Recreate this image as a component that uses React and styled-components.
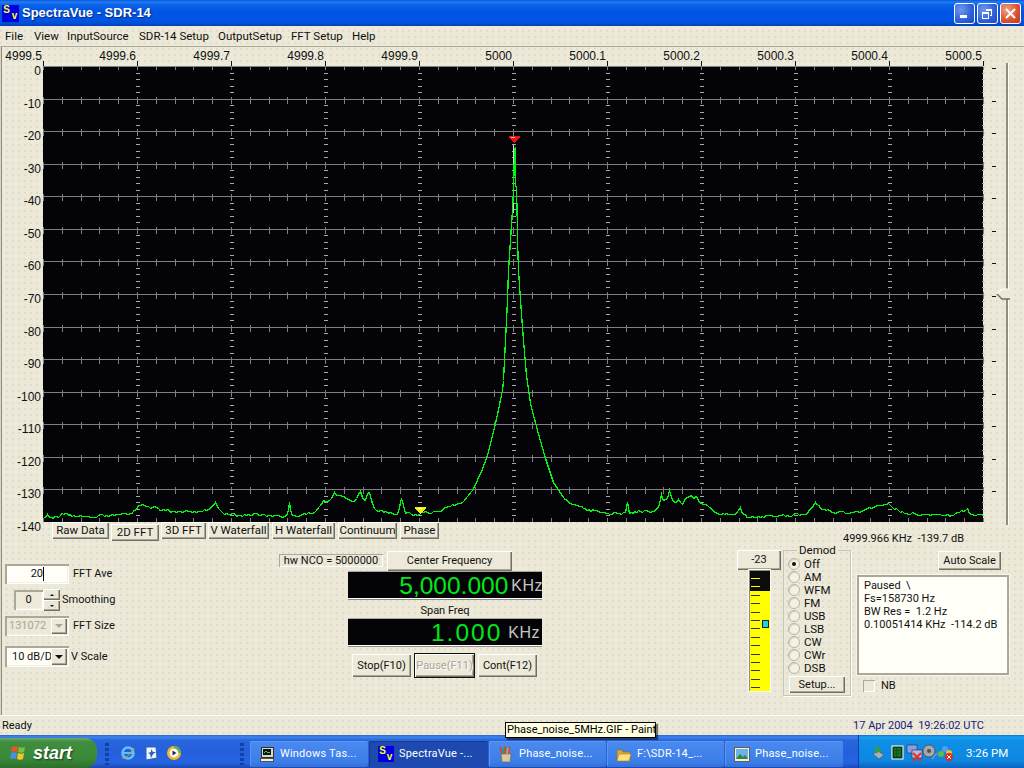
import React, { useMemo } from 'react';
import styled, { createGlobalStyle } from 'styled-components';

const Global = createGlobalStyle`
  html, body { margin: 0; padding: 0; background: #ece9d8; }
  #root { width: 1024px; height: 768px; overflow: hidden; }
  * { box-sizing: border-box; }
`;

const raised = `inset 1px 1px 0 #fff, inset -1px -1px 0 #716f64, inset -2px -2px 0 #aca899`;
const sunken = `inset 1px 1px 0 #aca899, inset 2px 2px 0 #aca899, inset -1px -1px 0 #fff, inset -2px -2px 0 #f1efe2`;

const Screen = styled.div`
  position: relative; width: 1024px; height: 768px; display: flex; flex-direction: column;
  font: 11px/14px Roboto, "Liberation Sans", Arial, sans-serif; color: #111; overflow: hidden;
  background-color: #ece9d8;
  background-image: radial-gradient(circle at 1px 1px, #e0ddcc 0.7px, transparent 1px);
  background-size: 6px 6px;
`;
const TitleBar = styled.div`
  height: 26px; flex: none; display: flex; align-items: center; padding: 0 3px 0 2px;
  background: linear-gradient(180deg, #0a56d8 0, #1f7bf4 2px, #0a62e8 5px, #0054e3 12px, #0055e5 20px, #0049c8 25px, #003dae 26px);
`;
const LogoBox = styled.span`
  width: ${p => p.$s}px; height: ${p => p.$s}px; flex: none; background: #0000e0; color: #ffff20; position: relative;
  font: bold ${p => Math.round(p.$s * 0.6)}px/1 "Liberation Sans", sans-serif; display: inline-block;
  & > i { position: absolute; font-style: normal; left: 8%; top: 2%; }
  & > b { position: absolute; right: 10%; bottom: 2%; }
`;
const TitleText = styled.span`
  margin-left: 3px; color: #fff; font: bold 13px/16px "Liberation Sans", sans-serif;
  text-shadow: 1px 1px 1px #0a2a80; flex: 1;
`;
const WinBtn = styled.span`
  width: 21px; height: 21px; flex: none; margin-left: 2px; border: 1px solid #fff; border-radius: 3px;
  display: flex; align-items: center; justify-content: center;
  background: ${p => p.$close
    ? 'radial-gradient(circle at 30% 30%, #f0a088, #d9502e 60%, #c03a18)'
    : 'radial-gradient(circle at 30% 30%, #6f97f0, #2f5fd8 60%, #1e48c0)'};
`;
const MenuBar = styled.div`
  height: 20px; flex: none; display: flex; align-items: center; padding-left: 5px; font-size: 11.5px;
`;
const MenuItem = styled.span`
  width: ${p => p.$w}px; flex: none; white-space: nowrap;
`;
const Main = styled.div`
  flex: 1; min-height: 0; display: flex; flex-direction: column; border-top: 1px solid #aca899;
  border-left: 1px solid #d8d5c4; box-shadow: inset 1px 0 0 #8f8d80; border-bottom: 1px solid #fff;
`;
const XAxis = styled.div`
  height: 14px; flex: none; display: grid; grid-template-columns: 41px repeat(10, 94px);
  font: 12px/14px "Liberation Sans", sans-serif; padding-top: 2px;
`;
const XLabel = styled.span`
  text-align: right; white-space: nowrap; margin-left: -20px;
`;
const PlotRow = styled.div`
  display: flex; height: 461px; flex: none;
`;
const YAxis = styled.div`
  width: 41px; flex: none; padding-top: 1px; display: grid; grid-auto-rows: 32.57px;
`;
const YLabel = styled.span`
  text-align: right; padding-right: 1px; font: 12px/18px "Liberation Sans", sans-serif;
`;
const Plot = styled.svg`
  width: 942px; height: 461px; display: block; flex: none;
`;
const SliderCol = styled.div`
  position: relative; flex: 1;
`;
const SliderTicks = styled.svg`
  position: absolute; left: 0; top: 0; width: 12px; height: 461px;
`;
const Track = styled.div`
  position: absolute; left: 22px; top: 2px; width: 3px; height: 462px; background: #8f8d80; border-right: 1px solid #fff;
`;
const Thumb = styled.svg`
  position: absolute; left: 12px; top: 227px; width: 15px; height: 12px;
`;
const TabsRow = styled.div`
  display: flex; height: 27px; flex: none; padding-left: 51px; align-items: flex-start; position: relative;
`;
const Tab = styled.button`
  all: unset; box-sizing: border-box; width: ${p => p.$w}px; height: 17px; margin-top: ${p => (p.$on ? 2 : 0)}px; margin-right: ${p => p.$gap}px;
  text-align: center; font-size: 11.5px; line-height: 15px; box-shadow: ${raised}; background: #ece9d8; flex: none;
`;
const CursorRead = styled.span`
  margin-left: auto; margin-right: 60px; margin-top: 10px; white-space: pre;
`;
const Controls = styled.div`
  flex: 1; display: flex; min-height: 0;
`;
const LeftCol = styled.div`
  width: 278px; flex: none; padding: 15px 0 0 4px; display: flex; flex-direction: column;
`;
const Row = styled.div`
  display: flex; align-items: center; height: ${p => p.$h}px; margin-top: ${p => p.$mt || 0}px;
`;
const Label = styled.span`
  margin-left: ${p => p.$ml}px; white-space: nowrap;
`;
const Field = styled.span`
  width: ${p => p.$w}px; height: ${p => p.$h}px; flex: none; margin-left: ${p => p.$ml || 0}px; box-shadow: ${sunken};
  display: flex; align-items: center; justify-content: ${p => p.$align || 'flex-start'}; padding: 0 ${p => p.$pad || 0}px;
  padding-right: ${p => p.$padR ?? p.$pad ?? 0}px;
  background: ${p => p.$bg || '#ece9d8'}; color: ${p => p.$color || '#111'}; overflow: hidden; white-space: nowrap; position: relative;
`;
const Caret = styled.i`
  display: inline-block; width: 1px; height: 14px; background: #000; margin-left: 0;
`;
const Spin = styled.span`
  width: 17px; height: 22px; flex: none; display: flex; flex-direction: column;
`;
const SpinBtn = styled.span`
  height: 11px; box-shadow: ${raised}; display: flex; align-items: center; justify-content: center;
`;
const SpinArrow = styled.i`
  width: 0; height: 0; border-left: 2px solid transparent; border-right: 2px solid transparent;
  ${p => p.$up ? 'border-bottom: 2px solid #111;' : 'border-top: 2px solid #111;'}
`;
const Drop = styled.span`
  position: absolute; right: 2px; top: 2px; bottom: 2px; width: 16px; box-shadow: ${raised}; background: #ece9d8;
  display: flex; align-items: center; justify-content: center;
`;
const Arrow = styled.i`
  width: 0; height: 0; border-left: 4px solid transparent; border-right: 4px solid transparent;
  border-top: 4px solid ${p => p.$c};
`;
const CenterCol = styled.div`
  width: 457px; flex: none; display: flex; flex-direction: column;
`;
const NcoRow = styled.div`
  display: flex; align-items: center; height: 21px; margin-top: 1px;
`;
const NcoBox = styled.span`
  width: 104px; height: 13px; line-height: 13px; text-align: center; white-space: nowrap;
  box-shadow: inset 1px 1px 0 #aca899, inset -1px -1px 0 #fff;
`;
const Btn = styled.button`
  all: unset; box-sizing: border-box; flex: none; text-align: center; width: ${p => p.$w}px; height: ${p => p.$h}px; margin-left: ${p => p.$ml || 0}px;
  font-size: 11px; line-height: ${p => p.$h - 2}px; box-shadow: ${raised}; background: #ece9d8; color: #111; white-space: nowrap;
`;
const PauseBtn = styled(Btn)`
  color: #a8a698; text-shadow: 1px 1px 0 #fff; box-shadow: 0 0 0 1px #111, ${raised};
`;
const Display = styled.div`
  margin: ${p => p.$mt}px 0 0 69px; width: 194px; height: 27px; background: #040408; display: flex; align-items: center; justify-content: flex-end; overflow: hidden;
  border-bottom: 1px solid #fff; box-shadow: 0 1px 0 #8f8d80, 0 -1px 0 #aca899; white-space: nowrap;
`;
const Digits = styled.span`
  color: #00e81a; font: 24.5px/27px "Liberation Sans", sans-serif; letter-spacing: ${p => p.$ls}px; margin-right: ${p => p.$mr}px;
`;
const Unit = styled.span`
  color: #c4c4c4; font: 16px/27px "Liberation Sans", sans-serif; flex: none; margin-right: ${p => p.$mr}px; letter-spacing: .5px;
`;
const SpanLabel = styled.div`
  width: 194px; margin: 5px 0 2px 69px; text-align: center; height: 13px; line-height: 14px;
`;
const ActionRow = styled.div`
  display: flex; margin: 8px 0 0 73px; gap: 4px;
`;
const RightArea = styled.div`
  flex: 1; display: flex;
`;
const MeterCol = styled.div`
  width: 44px; margin-left: 1px; flex: none; display: flex; flex-direction: column; align-items: center; padding-top: 1px;
`;
const Meter = styled.div`
  position: relative; width: 21px; height: 121px;
  background: linear-gradient(180deg, #0c0c0c 0 21px, #ffff00 21px); box-shadow: inset 1px 1px 0 #8f8d80, 0 0 0 1px #fbfaf4;
  overflow: hidden; padding-top: 8px; display: flex; flex-direction: column;
`;
const MeterTick = styled.i`
  width: 9px; height: 1px; margin: 0 0 7.4px 2px; flex: none; background: ${p => p.$i < 2 ? '#ffff00' : '#333'};
`;
const MeterKnob = styled.i`
  position: absolute; left: 13px; top: 50px; width: 7px; height: 8px; background: #10d8f0; border: 1px solid #222;
`;
const Demod = styled.fieldset`
  width: 68px; height: 152px; margin: -5px 0 0 2px; padding: 1px 0 0 4px; border: 1px solid #c8c5b4; box-shadow: 1px 1px 0 #fff; flex: none; position: relative;
  display: flex; flex-direction: column;
  & > legend { font-size: 11.5px; line-height: 12px; padding: 0 2px; margin-left: 9px; }
`;
const RadioRow = styled.div`
  display: flex; align-items: center; height: 13px; gap: 4px; font-size: 11.5px;
`;
const Radio = styled.span`
  width: 12px; height: 12px; border-radius: 50%; flex: none; background: #f3f1e6; border: 1px solid #b8b5a4; box-shadow: inset 1px 1px 0 #d5d2c0;
  display: flex; align-items: center; justify-content: center;
  &::after { content: ''; width: 4px; height: 4px; border-radius: 50%; background: ${p => p.$on ? '#111' : 'transparent'}; }
`;
const SetupBtn = styled(Btn)`
  margin: 2px 0 0 1px;
`;
const InfoCol = styled.div`
  flex: none; margin-left: 6px; width: 154px; display: flex; flex-direction: column;
`;
const AutoRow = styled.div`
  display: flex; padding-left: 81px; margin: 2px 0 5px;
`;
const InfoBox = styled.div`
  width: 152px; height: 100px; background: #fffff8; box-shadow: 0 0 0 1px #f7f6ec, inset 2px 2px 0 #aca899, inset -2px -2px 0 #aca899; padding: 4px 7px; line-height: 13px; white-space: pre;
`;
const NbRow = styled.div`
  display: flex; align-items: center; padding-left: 6px; margin-top: 4px; gap: 6px;
`;
const Check = styled.span`
  width: 12px; height: 12px; box-shadow: inset 1px 1px 0 #aca899, inset -1px -1px 0 #fff; background: #ece9d8;
`;
const StatusBar = styled.div`
  height: 19px; flex: none; display: flex; align-items: center; padding: 0 40px 0 2px; justify-content: space-between;
`;
const DateText = styled.span`
  color: #1a1a80; white-space: pre;
`;
const Taskbar = styled.div`
  height: 33px; flex: none; display: flex; align-items: stretch; color: #fff;
  background: linear-gradient(180deg, #2a62d8 0, #3f86ec 2px, #2a66dd 5px, #2460dc 16px, #2663e0 28px, #1a47b0 33px);
`;
const Start = styled.div`
  width: 97px; margin-top: 3px; flex: none; border-radius: 0 12px 12px 0; display: flex; align-items: center; padding-left: 10px; gap: 5px;
  background: linear-gradient(180deg, #6ea86a 0, #3e8e3e 4px, #3a8a3a 20px, #2d6e2d 30px);
  font: italic bold 18px/1 "Liberation Sans", sans-serif; color: #fff; text-shadow: 1px 1px 2px #143c14;
`;
const Grip = styled.span`
  width: 4px; margin: 8px 0 3px ${p => p.$ml}px; flex: none;
  background: repeating-linear-gradient(180deg, #123fa8 0 3px, transparent 3px 5px);
`;
const Quick = styled.span`
  display: flex; align-items: center; gap: 7px; margin: 2px 0 0 11px; width: 120px; flex: none;
`;
const Tasks = styled.div`
  display: flex; gap: 1px; margin-left: 6px; padding-top: 6px; padding-bottom: 1px; flex: none;
`;
const TaskBtn = styled.div`
  width: ${p => p.$w}px; flex: none; border-radius: 2px; display: flex; align-items: center; gap: 5px; padding-left: 9px; letter-spacing: .2px; overflow: hidden;
  background: ${p => p.$on ? '#1e4ab0' : 'linear-gradient(180deg,#4a8af0,#3c7ee8 80%,#3470dc)'}; box-shadow: ${p => p.$on ? 'inset 1px 1px 1px #173a8c' : 'inset 1px 1px 0 #5c98f2'}; white-space: nowrap;
`;
const Tray = styled.div`
  margin-left: auto; width: 166px; flex: none; border-left: 1px solid #0a3cb0; display: flex; align-items: center; padding: 2px 0 0 12px;
  background: linear-gradient(180deg, #0c6fd8 0, #18a0ee 2px, #0f8fe6 6px, #0e86df 26px, #0c62c0 33px);
`;
const Clock = styled.span`
  margin-left: 7px; white-space: nowrap; font-size: 11.5px;
`;
const Tooltip = styled.div`
  position: absolute; left: 505px; top: 722px; width: 151px; height: 16px; background: #ffffe1; color: #000; border: 1px solid #000;
  box-shadow: 2px 2px 1px rgba(0,0,0,.5); line-height: 14px; padding-left: 1px; white-space: nowrap;
`;

const KEY = [[0,517],[4,514],[7,517],[10,518],[13,516],[17,515],[22,513],[27,514],[32,516],[37,515],[42,516],[47,517],[53,517],[59,514],[65,516],[71,515],[77,514],[82,513],[87,513],[92,510],[95,505],[99,504],[103,506],[109,507],[115,508],[122,510],[129,511],[137,511],[147,511],[157,511],[165,509],[169,505],[172,502],[175,508],[179,512],[187,514],[197,515],[207,515],[212,513],[217,515],[227,515],[237,516],[243,515],[245,510],[246,502],[247,510],[249,515],[257,515],[267,513],[273,510],[277,505],[280,500],[284,501],[288,498],[291,492],[293,495],[297,495],[300,496],[303,498],[307,500],[311,501],[315,494],[317,491],[319,497],[322,500],[324,493],[326,492],[329,503],[333,510],[342,511],[349,513],[354,514],[358,498],[360,505],[362,513],[372,514],[384,512],[394,511],[407,506],[419,502],[429,490],[437,473],[444,455],[452,423],[459,390],[460,380],[462,340],[464,300],[465,270],[467,240],[469,210],[470,190],[471,150],[472,147],[472,186],[473,186],[474,230],[474,240],[475,270],[477,300],[480,340],[483,375],[487,403],[494,430],[502,458],[510,482],[520,497],[527,503],[540,508],[557,512],[574,513],[582,512],[584,502],[586,513],[595,510],[607,512],[615,507],[618,494],[620,500],[624,498],[626,490],[629,499],[632,502],[635,499],[639,504],[642,498],[648,495],[650,498],[653,496],[656,502],[664,505],[674,513],[687,514],[692,514],[697,507],[700,514],[707,517],[734,516],[764,513],[772,502],[777,508],[790,512],[810,512],[830,507],[845,503],[857,512],[887,515],[910,515],[924,508],[927,514],[940,515]];

function buildSpectrum() {
  const pts = [];
  const noise = i => Math.sin(i * 12.9898) * 43758.5453 % 1;
  for (let k = 0; k < KEY.length - 1; k++) {
    const [x0, y0] = KEY[k];
    const [x1, y1] = KEY[k + 1];
    const n = Math.max(1, Math.round((x1 - x0) / 2));
    for (let s = 0; s < n; s++) {
      const x = x0 + ((x1 - x0) * s) / n;
      let y = y0 + ((y1 - y0) * s) / n;
      if (y > 505 && s > 0) y += Math.round(noise(x + 1) * 1.4);
      pts.push(`${x + 0.5},${Math.round(y) - 61 + 0.5}`);
    }
  }
  const last = KEY[KEY.length - 1];
  pts.push(`${last[0]},${last[1] - 61}`);
  return pts.join(' ');
}

const STEP_Y = 32.57;
const TOP = 5;

function Chart() {
  const spectrum = useMemo(buildSpectrum, []);
  const { grid, dashes, black } = useMemo(() => {
    let grid = '';
    let dashes = '';
    let black = '';
    for (let r = 0; r <= 13; r++) {
      const y = Math.round(TOP + r * STEP_Y) + 0.5;
      grid += `M1 ${y}H941`;
      for (let c = 0; c <= 50; c++) {
        const x = Math.round(1 + c * 18.8) + 0.5;
        grid += r === 0 ? `M${x} ${y}V${y + 3}` : `M${x} ${y - 3}V${y + 4}`;
      }
    }
    for (let c = 0; c <= 50; c++) {
      const x = Math.round(1 + c * 18.8) + 0.5;
      grid += `M${x} 457V461`;
    }
    for (let c = 0; c <= 10; c++) {
      const x = Math.round(1 + c * 94) + 0.5;
      black += `M${x} 0V5`;
      if (c === 0) continue;
      for (let k = 1; k < 70; k++) {
        if (k % 5 === 0) continue;
        const y = Math.round(TOP + k * 6.514) + 0.5;
        dashes += `M${x - 2} ${y}h${c === 10 ? 2 : 4}`;
      }
    }
    return { grid, dashes, black };
  }, []);
  return (
    <Plot viewBox="0 0 942 461" shapeRendering="crispEdges">
      <rect x="1" y="5" width="940" height="456" fill="#040408" />
      <path d={grid} stroke="#808080" fill="none" />
      <path d={dashes} stroke="#a8a8a8" fill="none" />
      <path d={black} stroke="#111" fill="none" />
      <path d="M471.5 84V152" stroke="#d8d8d8" />
      <g transform="translate(1 0)">
        <polyline points={spectrum} fill="none" stroke="#00f810" strokeWidth="1.3" />
        <path d="M466 75h11v2h-1v1h-1v1h-1v1h-1v1h-1v1h-1v-1h-1v-1h-1v-1h-1v-1h-1v-1h-1z" fill="#f01010" />
        <path d="M468 76.5h4" stroke="#ffb0b0" />
        <path d="M372 446h11v2h-1v1h-1v1h-1v1h-1v1h-1v1h-1v-1h-1v-1h-1v-1h-1v-1h-1v-1h-1z" fill="#f4f000" />
        <path d="M375 447.5h4" stroke="#fffff0" />
      </g>
    </Plot>
  );
}

const Logo = ({ s }) => (
  <LogoBox $s={s}><i>S</i><b>v</b></LogoBox>
);
const Windows = () => (
  <svg width="18" height="18" viewBox="0 0 18 18">
    <path d="M2 3c2-1 4-1 6 0l-1 5c-2-1-4-1-6 0z" fill="#e8562a" />
    <path d="M9 3c2 1 4 1 6 0l-1 5c-2 1-4 1-6 0z" fill="#7cc043" />
    <path d="M1 9c2-1 4-1 6 0l-1 6c-2-1-4-1-6 0z" fill="#4a8ee8" />
    <path d="M8 9c2 1 4 1 6 0l-1 6c-2 1-4 1-6 0z" fill="#f6c428" />
  </svg>
);
const IEIcon = () => (
  <svg width="16" height="16" viewBox="0 0 16 16">
    <circle cx="8" cy="8" r="5.5" fill="none" stroke="#60c0f8" strokeWidth="2.6" />
    <path d="M3 8h10" stroke="#60c0f8" strokeWidth="2" />
    <path d="M2 13c3 1 8-3 12-10" stroke="#e0a020" strokeWidth="1" fill="none" />
  </svg>
);
const DesktopIcon = () => (
  <svg width="16" height="16" viewBox="0 0 16 16">
    <path d="M3 2h10l1 11-11 2z" fill="#f0f4fc" stroke="#3060b0" />
    <path d="M8 4l2 3h3l-3 2-2 4-1-4-2-1 3-1z" fill="#2060c0" />
  </svg>
);
const MediaIcon = () => (
  <svg width="16" height="16" viewBox="0 0 16 16">
    <circle cx="8" cy="8" r="7" fill="#f0b828" />
    <path d="M8 1a7 7 0 0 1 7 7h-4a3 3 0 0 0-3-3z" fill="#58b048" />
    <circle cx="8" cy="8" r="4.4" fill="#fff" />
    <path d="M6.5 5.5l4 2.5-4 2.5z" fill="#202840" />
  </svg>
);
const MonitorIcon = () => (
  <svg width="16" height="16" viewBox="0 0 16 16" shapeRendering="crispEdges">
    <rect x="2" y="1" width="12" height="10" fill="#d8d8d0" stroke="#303030" />
    <rect x="4" y="3" width="8" height="6" fill="#081810" />
    <path d="M5 7l2-2 2 2 2-1" stroke="#30e040" fill="none" />
    <rect x="1" y="12" width="13" height="3" fill="#f0efe8" stroke="#505050" />
  </svg>
);
const PaintIcon = () => (
  <svg width="16" height="18" viewBox="0 0 16 18">
    <path d="M3 9h10l-1 8H4z" fill="#d8c8a0" stroke="#806040" strokeWidth=".6" />
    <path d="M4 9L2 2M7 9V1M10 9l2-7" strokeWidth="1.5" stroke="#e04020" fill="none" />
    <path d="M6 9L5 3" stroke="#30a040" strokeWidth="1.4" />
    <path d="M9 9l1-6" stroke="#e0b020" strokeWidth="1.4" />
  </svg>
);
const FolderIcon = () => (
  <svg width="16" height="15" viewBox="0 0 16 15">
    <path d="M1 3h5l1 2h7v9H1z" fill="#d8a838" stroke="#906818" strokeWidth=".6" />
    <path d="M3 7h12l-2 7H1z" fill="#fbe080" stroke="#a88028" strokeWidth=".6" />
  </svg>
);
const PictureIcon = () => (
  <svg width="16" height="15" viewBox="0 0 16 15">
    <rect x=".5" y=".5" width="15" height="14" fill="#f0f0e8" stroke="#606058" />
    <rect x="2" y="2" width="12" height="10" fill="#70b0e8" />
    <path d="M2 12l4-5 3 3 2-2 3 4z" fill="#308838" />
  </svg>
);
const TrayIcons = () => (
  <svg width="88" height="20" viewBox="0 0 88 20">
    <path d="M2 11l5-3 6 4-5 4z" fill="#a8b0b8" stroke="#405060" strokeWidth=".6" />
    <path d="M5 3l4 1-1 2 3 2-4 1-1 2-2-4z" fill="#30a040" />
    <rect x="21" y="3" width="11" height="13" fill="#0a3a10" stroke="#fff" strokeWidth="1" />
    <path d="M23 6h7M23 9h7M23 12h7M24 5v9M27 5v9M29 5v9" stroke="#209030" strokeWidth=".8" />
    <rect x="36" y="2" width="10" height="8" fill="#8fa0d8" stroke="#283878" strokeWidth=".7" />
    <rect x="41" y="7" width="10" height="8" fill="#b0bce8" stroke="#283878" strokeWidth=".7" />
    <path d="M42 10l8 8M50 10l-8 8" stroke="#e83018" strokeWidth="2" />
    <circle cx="58" cy="8" r="6" fill="#a8a8a8" stroke="#404040" strokeWidth=".7" />
    <circle cx="58" cy="8" r="2" fill="#505050" />
    <path d="M61 16l5-6" stroke="#8090d0" strokeWidth="1.5" />
    <circle cx="74" cy="6" r="3" fill="#50a0e8" />
    <circle cx="70" cy="11" r="3" fill="#60b850" />
    <circle cx="78" cy="10" r="3" fill="#f0c030" />
    <circle cx="78" cy="14" r="4" fill="#e02820" />
    <path d="M76 12l4 4M80 12l-4 4" stroke="#fff" strokeWidth="1" />
  </svg>
);

const XLABELS = ['4999.5','4999.6','4999.7','4999.8','4999.9','5000','5000.1','5000.2','5000.3','5000.4','5000.5'];
const MENUS = [['File',29],['View',33],['InputSource',72],['SDR-14 Setup',79],['OutputSetup',73],['FFT Setup',61],['Help',30]];
const TABS = [['Raw Data',57,2,false],['2D FFT',48,2,true],['3D FFT',45,2,false],['V Waterfall',61,3,false],['H Waterfall',63,3,false],['Continuum',59,3,false],['Phase',39,0,false]];
const MODES = ['Off','AM','WFM','FM','USB','LSB','CW','CWr','DSB'];

export default function App() {
  return (
    <>
      <Global />
      <Screen>
        <TitleBar>
          <Logo s={17} />
          <TitleText>SpectraVue - SDR-14</TitleText>
          <WinBtn>
            <svg width="13" height="13" viewBox="0 0 13 13"><rect x="2" y="8" width="7" height="3" fill="#fff" /></svg>
          </WinBtn>
          <WinBtn>
            <svg width="13" height="13" viewBox="0 0 13 13" fill="none" stroke="#fff" shapeRendering="crispEdges"><path d="M4.5 2.5h6v6h-2" /><path d="M4.5 3.5h6" /><rect x="1.5" y="5.5" width="6" height="6" /><path d="M1.5 6.5h6" /></svg>
          </WinBtn>
          <WinBtn $close>
            <svg width="13" height="13" viewBox="0 0 13 13"><path d="M2 2l9 9M11 2l-9 9" stroke="#fff" strokeWidth="2" /></svg>
          </WinBtn>
        </TitleBar>
        <MenuBar>
          {MENUS.map(([m, w]) => <MenuItem key={m} $w={w}>{m}</MenuItem>)}
        </MenuBar>
        <Main>
          <XAxis>{XLABELS.map(l => <XLabel key={l}>{l}</XLabel>)}</XAxis>
          <PlotRow>
            <YAxis>
              {Array.from({ length: 15 }, (_, i) => <YLabel key={i}>{i === 0 ? '0' : `-${i * 10}`}</YLabel>)}
            </YAxis>
            <Chart />
            <SliderCol>
              <SliderTicks viewBox="0 0 12 461" shapeRendering="crispEdges">
                {Array.from({ length: 15 }, (_, i) => (
                  <rect key={i} x="8" y={Math.round(7 + i * 32.57)} width="4" height="1" fill="#111" />
                ))}
              </SliderTicks>
              <Track />
              <Thumb viewBox="0 0 15 12">
                <path d="M1 6L6 1H14V11H6z" fill="#ece9d8" />
                <path d="M1 6L6 1H14" fill="none" stroke="#fff" strokeWidth="1.2" />
                <path d="M1 6l5 5H14" fill="none" stroke="#716f64" strokeWidth="1.4" />
              </Thumb>
            </SliderCol>
          </PlotRow>
          <TabsRow>
            {TABS.map(([t, w, g, on]) => <Tab key={t} $w={w} $gap={g} $on={on}>{t}</Tab>)}
            <CursorRead>4999.966 KHz  -139.7 dB</CursorRead>
          </TabsRow>
          <Controls>
            <LeftCol>
              <Row $h={20}>
                <Field $w={64} $h={20} $bg="#fffff8" $align="flex-end" $padR={25}>20<Caret /></Field>
                <Label $ml={4}>FFT Ave</Label>
              </Row>
              <Row $h={22} $mt={5}>
                <Field $w={29} $h={20} $align="center" $ml={9}>0</Field>
                <Spin><SpinBtn><SpinArrow $up /></SpinBtn><SpinBtn><SpinArrow /></SpinBtn></Spin>
                <Label $ml={2}>Smoothing</Label>
              </Row>
              <Row $h={20} $mt={5}>
                <Field $w={64} $h={20} $pad={4} $color="#a8a698">131072<Drop><Arrow $c="#a8a698" /></Drop></Field>
                <Label $ml={4}>FFT Size</Label>
              </Row>
              <Row $h={21} $mt={10}>
                <Field $w={64} $h={21} $pad={7} $bg="#fffff8">10 dB/D<Drop><Arrow $c="#111" /></Drop></Field>
                <Label $ml={2}>V Scale</Label>
              </Row>
            </LeftCol>
            <CenterCol>
              <NcoRow>
                <NcoBox>hw NCO = 5000000</NcoBox>
                <Btn $w={125} $h={20} $ml={4}>Center Frequency</Btn>
              </NcoRow>
              <Display $mt={1}><Digits $ls={0} $mr={3}>5,000.000</Digits><Unit $mr={-1}>KHz</Unit></Display>
              <SpanLabel>Span Freq</SpanLabel>
              <Display $mt={0}><Digits $ls={2} $mr={6}>1.000</Digits><Unit $mr={2}>KHz</Unit></Display>
              <ActionRow>
                <Btn $w={59} $h={23}>Stop(F10)</Btn>
                <PauseBtn $w={59} $h={23}>Pause(F11)</PauseBtn>
                <Btn $w={59} $h={23}>Cont(F12)</Btn>
              </ActionRow>
            </CenterCol>
            <RightArea>
              <MeterCol>
                <Btn $w={44} $h={20}>-23</Btn>
                <Meter>
                  {Array.from({ length: 14 }, (_, i) => <MeterTick key={i} $i={i} />)}
                  <MeterKnob />
                </Meter>
              </MeterCol>
              <Demod>
                <legend>Demod</legend>
                {MODES.map((m, i) => <RadioRow key={m}><Radio $on={i === 0} />{m}</RadioRow>)}
                <SetupBtn $w={56} $h={17}>Setup...</SetupBtn>
              </Demod>
              <InfoCol>
                <AutoRow><Btn $w={63} $h={19}>Auto Scale</Btn></AutoRow>
                <InfoBox>{'Paused  \\\nFs=158730 Hz\nBW Res =  1.2 Hz\n0.10051414 KHz  -114.2 dB'}</InfoBox>
                <NbRow><Check />NB</NbRow>
              </InfoCol>
            </RightArea>
          </Controls>
        </Main>
        <StatusBar>
          <span>Ready</span>
          <DateText>17 Apr 2004  19:26:02 UTC</DateText>
        </StatusBar>
        <Taskbar>
          <Start><Windows />start</Start>
          <Grip $ml={8} />
          <Quick><IEIcon /><DesktopIcon /><MediaIcon /></Quick>
          <Grip $ml={0} />
          <Tasks>
            <TaskBtn $w={118}><MonitorIcon />Windows Tas...</TaskBtn>
            <TaskBtn $w={119} $on><Logo s={16} />SpectraVue -...</TaskBtn>
            <TaskBtn $w={117}><PaintIcon />Phase_noise...</TaskBtn>
            <TaskBtn $w={117}><FolderIcon />F:\SDR-14_...</TaskBtn>
            <TaskBtn $w={118}><PictureIcon />Phase_noise...</TaskBtn>
          </Tasks>
          <Tray><TrayIcons /><Clock>3:26 PM</Clock></Tray>
        </Taskbar>
        <Tooltip>Phase_noise_5MHz.GIF - Paint</Tooltip>
      </Screen>
    </>
  );
}
